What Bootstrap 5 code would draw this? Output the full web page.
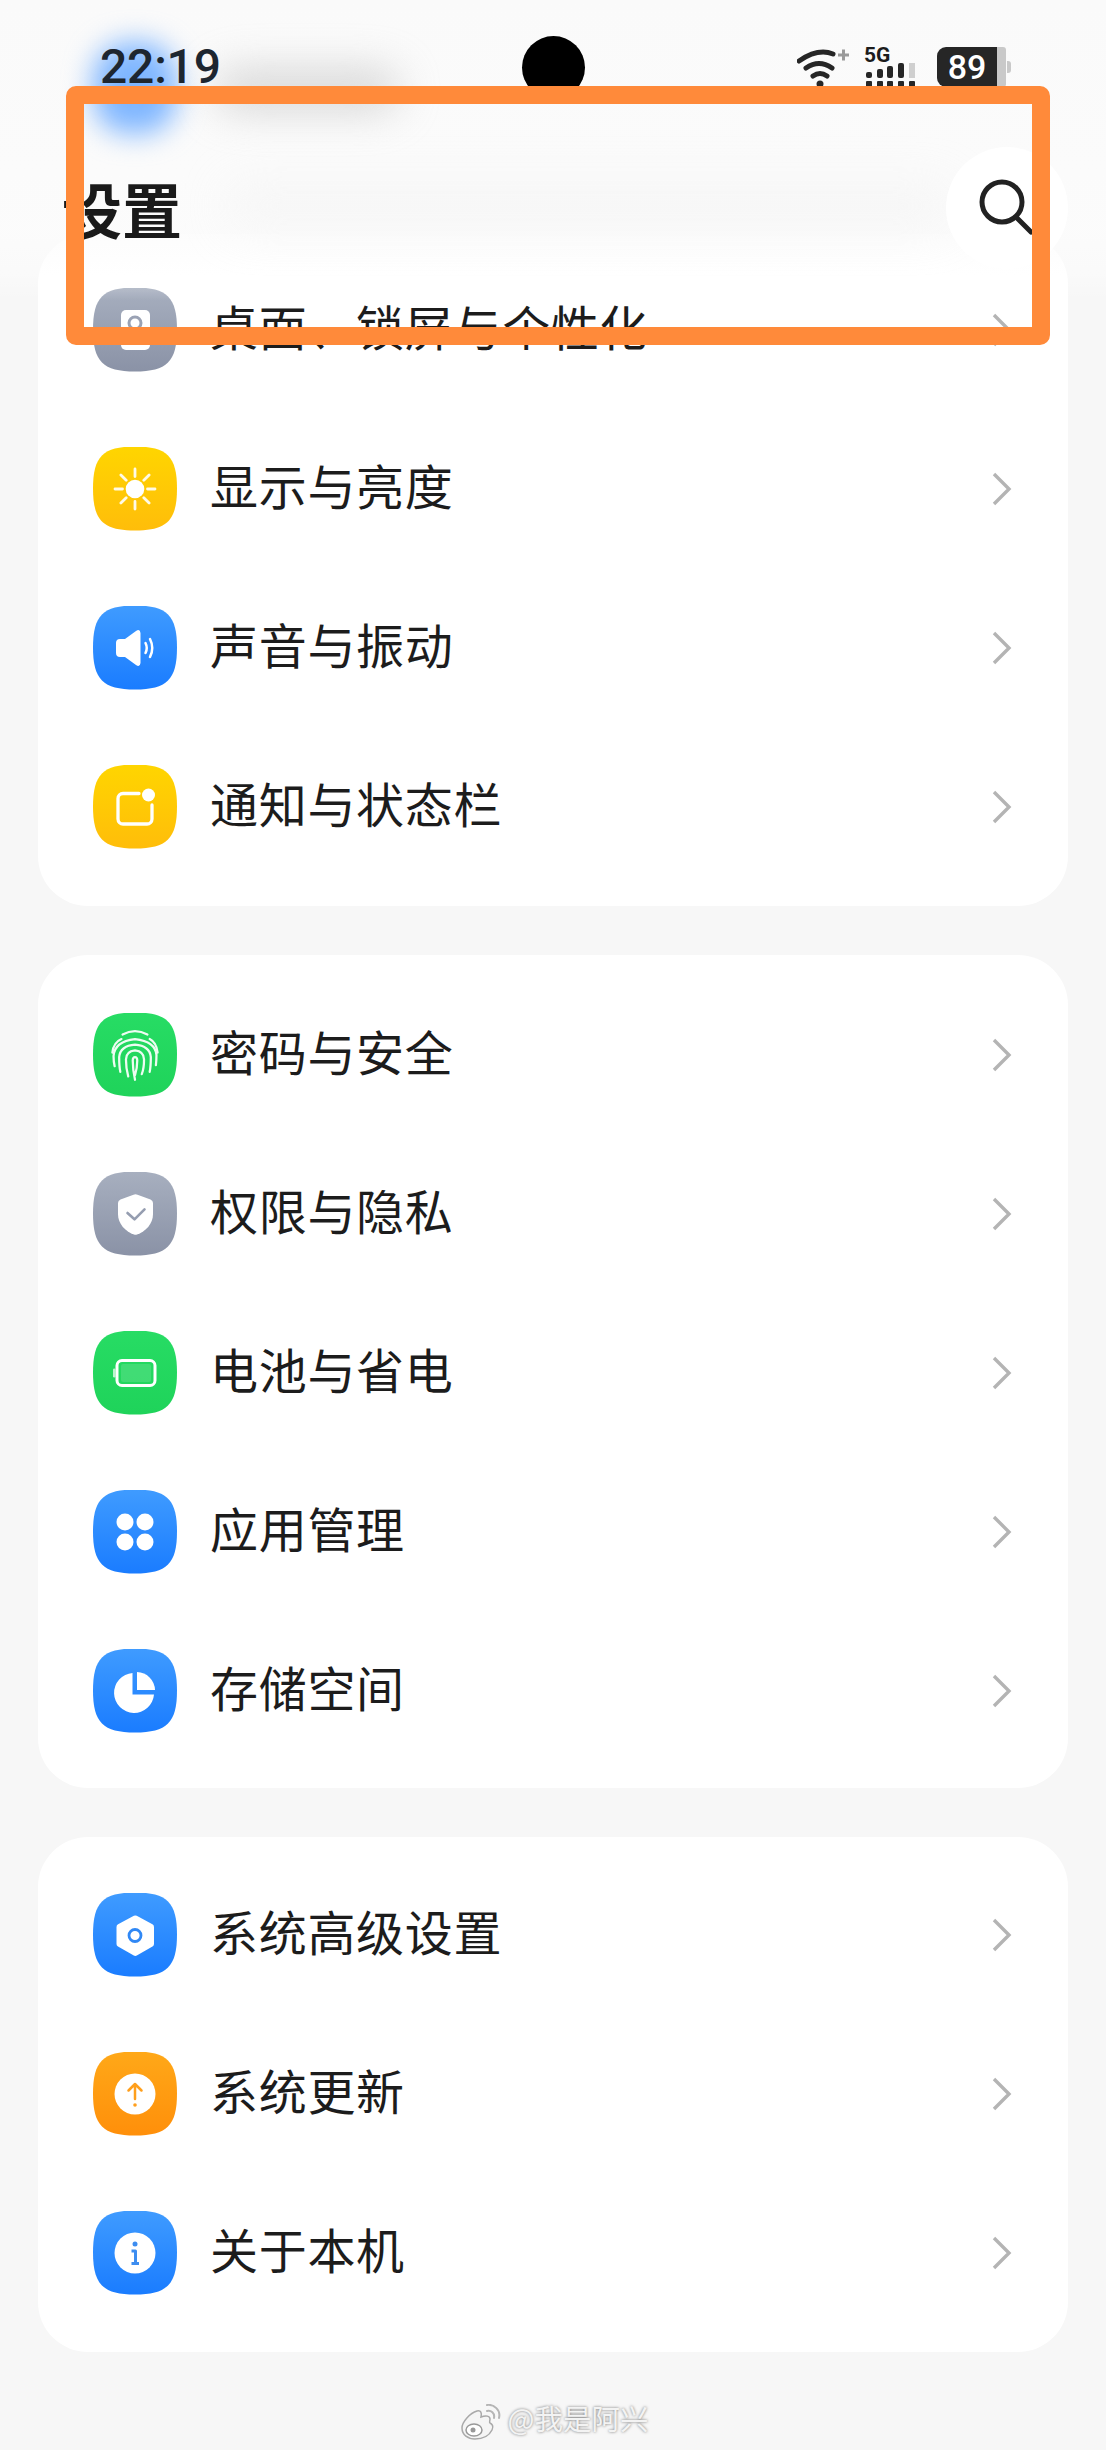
<!DOCTYPE html>
<html lang="zh-CN">
<head>
<meta charset="utf-8">
<title>设置</title>
<link href="https://cdn.jsdelivr.net/npm/bootstrap@5.3.0/dist/css/bootstrap.min.css" rel="stylesheet">
<style>
html,body{margin:0;background:#f7f7f7}
.phone{position:relative;width:1106px;height:2450px;overflow:hidden;background:#f7f7f7;font-family:"Noto Sans CJK SC","Noto Sans",sans-serif;color:#1c1c1c}
.lists{padding:234px 38px 0;gap:49px}
.group{background:#fff;border-radius:50px;padding:0 55px 0 55px}
.group-a{padding-top:16px;padding-bottom:20px}
.group-b{padding-top:20px;padding-bottom:18px}
.group-c{padding-top:18px;padding-bottom:20px}
.entry{height:159px;gap:33px}
.entry-label{font-size:48px;line-height:1;letter-spacing:.7px;flex:1;padding-bottom:9px}
.tile{width:84px;height:84px;flex:none;clip-path:path("M42 0C74 0 84 10 84 42S74 84 42 84 0 74 0 42 10 0 42 0Z")}
.tile svg{display:block;width:84px;height:84px}
.t-gray{background:linear-gradient(#a7afbf,#8a92a6)}
.t-yellow{background:linear-gradient(#ffd500,#ffbd0a)}
.t-blue{background:linear-gradient(#3f9bff,#1a7cff)}
.t-green{background:linear-gradient(#27dc64,#1fd35a)}
.t-orange{background:linear-gradient(#ffa818,#ff8f0a)}
.chev{width:22px;height:36px;flex:none}
.top-fade{position:absolute;left:0;top:0;width:100%;height:300px;background:linear-gradient(#fafafa 0,#fbfbfb 170px,rgba(252,252,252,.9) 232px,rgba(255,255,255,.35) 275px,rgba(255,255,255,0) 300px)}
.ghost-icon{position:absolute;left:93px;top:42px;width:84px;height:92px;border-radius:36px;background:#7fb6ff;filter:blur(14px)}
.ghost-text{position:absolute;left:214px;top:68px;width:186px;height:44px;border-radius:22px;background:#bdbdbd;filter:blur(20px);opacity:.55}
.ghost-band{position:absolute;left:230px;top:186px;width:720px;height:40px;background:#e9e9e9;filter:blur(24px);opacity:.35}
.header{position:absolute;left:0;top:0;width:100%}
.status{height:134px;padding:0 95px 0 100px}
.clock{font-family:Roboto,"Liberation Sans",sans-serif;font-size:48px;font-weight:500;line-height:1;letter-spacing:-.2px;color:#1d2630;width:422px}
.camera{width:63px;height:63px;border-radius:50%;background:#000;flex:none}
.status-right{margin-left:auto;gap:13px}
.signal-box{width:54px}
.fiveg{font-family:Roboto,"Liberation Sans",sans-serif;font-size:21px;font-weight:700;line-height:1;height:15px;padding-left:0;margin-top:-3px;margin-bottom:3px}
.batt-box{margin-left:6px}
.batt{width:60px;height:40px;background:#262626;color:#fff;border-radius:9px 0 0 9px;font-family:Roboto,"Liberation Sans",sans-serif;font-size:34px;font-weight:500;line-height:40px;text-align:center}
.batt-rest{width:9px;height:40px;background:#c9c9c9;border-radius:0 3px 3px 0}
.batt-nub{width:4px;height:12px;background:#c9c9c9;border-radius:0 3px 3px 0;margin-left:1px}
.title-row{padding:26px 38px 0 62px;height:122px}
.title-text{font-size:60px;font-weight:700;line-height:1;color:#1a1a1a}
.search-btn{width:122px;height:122px;border-radius:50%;background:#fff;border:0;padding:0}
.frame{position:absolute;left:66px;top:86px;width:984px;height:259px;border:18px solid #ff8a3a;border-radius:10px;pointer-events:none}
.wm{height:98px;padding-top:52px;gap:6px;color:#f3f3f3;font-size:28.5px;line-height:1;text-shadow:0 0 3px rgba(0,0,0,.55)}
</style>
</head>
<body>
<div class="phone">
  <div class="lists d-flex flex-column">
    <section class="group group-a">
      <div class="entry d-flex align-items-center"><div class="tile t-gray"><svg viewBox="0 0 84 84"><rect x="28" y="22" width="29" height="40" rx="5" fill="#fff"/><circle cx="42" cy="35" r="6" fill="none" stroke="#9aa2b4" stroke-width="3"/></svg></div><div class="entry-label">桌面、锁屏与个性化</div><svg class="chev" viewBox="0 0 22 36"><path d="M3 3l15 15L3 33" fill="none" stroke="#b4b4b4" stroke-width="3.4"/></svg></div>
      <div class="entry d-flex align-items-center"><div class="tile t-yellow"><svg viewBox="0 0 84 84"><circle cx="42" cy="42" r="9.3" fill="#fff"/><g stroke="#fff" stroke-width="2.8" stroke-linecap="round" opacity=".9"><path d="M42 22v7.500M42 54.500v7.500M22 42h7.500M54.500 42H62M27.900 27.900l5.300 5.300M50.800 50.800l5.300 5.300M27.900 56.100l5.300-5.300M50.800 33.200l5.300-5.300"/></g></svg></div><div class="entry-label">显示与亮度</div><svg class="chev" viewBox="0 0 22 36"><path d="M3 3l15 15L3 33" fill="none" stroke="#b4b4b4" stroke-width="3.4"/></svg></div>
      <div class="entry d-flex align-items-center"><div class="tile t-blue"><svg viewBox="0 0 84 84"><path d="M23 37q0-4 4-4h5l11-8q4-2.500 4.500 2v30q-.5 4.500-4.500 2l-11-8h-5q-4 0-4-4z" fill="#fff"/><path d="M52.500 37q2.500 5 0 10M57 33q4.500 9 0 18" fill="none" stroke="#fff" stroke-width="2.500" stroke-linecap="round"/></svg></div><div class="entry-label">声音与振动</div><svg class="chev" viewBox="0 0 22 36"><path d="M3 3l15 15L3 33" fill="none" stroke="#b4b4b4" stroke-width="3.4"/></svg></div>
      <div class="entry d-flex align-items-center"><div class="tile t-yellow"><svg viewBox="0 0 84 84"><path d="M46 28.500H30a5 5 0 0 0-5 5V54a5 5 0 0 0 5 5h24a5 5 0 0 0 5-5V40" fill="none" stroke="#fff" stroke-width="3.300" stroke-linecap="round"/><circle cx="55.500" cy="30" r="6.500" fill="#fff"/></svg></div><div class="entry-label">通知与状态栏</div><svg class="chev" viewBox="0 0 22 36"><path d="M3 3l15 15L3 33" fill="none" stroke="#b4b4b4" stroke-width="3.4"/></svg></div>
    </section>
    <section class="group group-b">
      <div class="entry d-flex align-items-center"><div class="tile t-green"><svg viewBox="0 0 84 84"><g transform="translate(42 43) scale(1.13) translate(-42 -44)" fill="none" stroke="#fff" stroke-width="2" stroke-linecap="round" opacity=".92"><path d="M31 25q11-6 22 0"/><path d="M22 41q1-9 8-12M62 41q-1-9-7-12"/><path d="M24 53q-1-4-1-9 1-13 19-15 18 2 19 14 0 5-.5 9"/><path d="M29 58q-1-5-1-13 1-10 14-11 13 1 14 11 0 8-1 13"/><path d="M36 62q-2-7-2-15 0-7 8-8 8 1 8 8 0 8-2 13"/><path d="M42 65q-2-9-2-17 0-3 2-3t2 3q0 7-2 13"/></g></svg></div><div class="entry-label">密码与安全</div><svg class="chev" viewBox="0 0 22 36"><path d="M3 3l15 15L3 33" fill="none" stroke="#b4b4b4" stroke-width="3.4"/></svg></div>
      <div class="entry d-flex align-items-center"><div class="tile t-gray"><svg viewBox="0 0 84 84"><path d="M40.500 22.700q2-.7 4 0l13 4.800q2.500 1 2.500 3.500V42c0 10-7.500 17.500-16 20.500q-1.500.5-3 0C32.500 59.500 25 52 25 42V31q0-2.500 2.500-3.500z" fill="#fff"/><path d="M34.500 41l7 6.300 10-10" fill="none" stroke="#959db0" stroke-width="2.600" stroke-linecap="round" stroke-linejoin="round"/></svg></div><div class="entry-label">权限与隐私</div><svg class="chev" viewBox="0 0 22 36"><path d="M3 3l15 15L3 33" fill="none" stroke="#b4b4b4" stroke-width="3.4"/></svg></div>
      <div class="entry d-flex align-items-center"><div class="tile t-green"><svg viewBox="0 0 84 84"><rect x="24" y="29.500" width="38" height="25" rx="5" fill="none" stroke="#fff" stroke-width="3"/><rect x="28" y="33" width="30" height="18" rx="2" fill="#b8f2cb" opacity=".2"/><rect x="20" y="37.500" width="2.500" height="9" rx="1.200" fill="#fff" opacity=".7"/></svg></div><div class="entry-label">电池与省电</div><svg class="chev" viewBox="0 0 22 36"><path d="M3 3l15 15L3 33" fill="none" stroke="#b4b4b4" stroke-width="3.4"/></svg></div>
      <div class="entry d-flex align-items-center"><div class="tile t-blue"><svg viewBox="0 0 84 84"><g fill="#fff"><circle cx="32" cy="32" r="8.500"/><circle cx="52" cy="32" r="8.500"/><circle cx="32" cy="52" r="8.500"/><circle cx="52" cy="52" r="8.500"/></g></svg></div><div class="entry-label">应用管理</div><svg class="chev" viewBox="0 0 22 36"><path d="M3 3l15 15L3 33" fill="none" stroke="#b4b4b4" stroke-width="3.4"/></svg></div>
      <div class="entry d-flex align-items-center"><div class="tile t-blue"><svg viewBox="0 0 84 84"><path d="M39.500 24v21.500H61A20 20 0 1 1 39.500 24z" fill="#fff"/><path d="M44 23a18.500 18.500 0 0 1 18 18H44z" fill="#fff"/></svg></div><div class="entry-label">存储空间</div><svg class="chev" viewBox="0 0 22 36"><path d="M3 3l15 15L3 33" fill="none" stroke="#b4b4b4" stroke-width="3.4"/></svg></div>
    </section>
    <section class="group group-c">
      <div class="entry d-flex align-items-center"><div class="tile t-blue"><svg viewBox="0 0 84 84"><path d="M42.300 25.500L58 34v17l-15.700 9-15.800-9V34z" fill="#fff" stroke="#fff" stroke-width="6" stroke-linejoin="round"/><circle cx="42" cy="42.500" r="6" fill="none" stroke="#3088f5" stroke-width="2.800"/></svg></div><div class="entry-label">系统高级设置</div><svg class="chev" viewBox="0 0 22 36"><path d="M3 3l15 15L3 33" fill="none" stroke="#b4b4b4" stroke-width="3.4"/></svg></div>
      <div class="entry d-flex align-items-center"><div class="tile t-orange"><svg viewBox="0 0 84 84"><circle cx="42" cy="42" r="20.500" fill="#fff"/><path d="M42 47V32M35.500 38.500L42 32l6.500 6.500" fill="none" stroke="#ff9f1c" stroke-width="2.500" stroke-linecap="round" stroke-linejoin="round"/><circle cx="42" cy="53" r="1.800" fill="#ff9f1c"/></svg></div><div class="entry-label">系统更新</div><svg class="chev" viewBox="0 0 22 36"><path d="M3 3l15 15L3 33" fill="none" stroke="#b4b4b4" stroke-width="3.4"/></svg></div>
      <div class="entry d-flex align-items-center"><div class="tile t-blue"><svg viewBox="0 0 84 84"><circle cx="42" cy="42" r="20.500" fill="#fff"/><circle cx="42" cy="33" r="2.500" fill="#3d8df0"/><path d="M38.500 40H42.500V52M38.500 52.500H46" fill="none" stroke="#3d8df0" stroke-width="3" stroke-linejoin="round"/></svg></div><div class="entry-label">关于本机</div><svg class="chev" viewBox="0 0 22 36"><path d="M3 3l15 15L3 33" fill="none" stroke="#b4b4b4" stroke-width="3.4"/></svg></div>
    </section>
  </div>
  <div class="wm d-flex align-items-start justify-content-center">
    <svg width="44" height="36" viewBox="0 0 42 36"><path d="M3 24c0-6 8-15 15-17 4-1 5 2 4 6 5-2 9-1 9 2 0 2-1 3 0 4 2 1 4 3 2 7-3 6-10 9-17 9C9 35 3 31 3 24z" fill="#f5f5f5" stroke="#a9a9a9" stroke-width="1.500"/><ellipse cx="15" cy="26" rx="8" ry="6" fill="#fff" stroke="#999" stroke-width="1.500"/><circle cx="14" cy="26" r="2.500" fill="#999"/><path d="M28 7c4-1 8 2 7 7M28 1c7-1 14 5 12 13" fill="none" stroke="#b5b5b5" stroke-width="2" stroke-linecap="round"/></svg>
    <span>@我是阿兴</span>
  </div>

  <div class="top-fade"></div>
  <div class="ghost-icon"></div>
  <div class="ghost-text"></div>
  <div class="ghost-band"></div>

  <header class="header">
    <div class="status d-flex align-items-center">
      <div class="clock">22:19</div>
      <div class="camera"></div>
      <div class="status-right d-flex align-items-center">
        <svg width="54" height="40" viewBox="0 0 54 40"><g fill="none" stroke="#262626" stroke-width="5" stroke-linecap="round"><path d="M2 14q19-13 34-7"/><path d="M9 21q13-9 26 0"/><path d="M16 29q7-5 14 0"/></g><circle cx="23" cy="37" r="3.500" fill="#262626"/><path d="M41 8h11M46.500 2.500v11" stroke="#9a9a9a" stroke-width="3"/></svg>
        <div class="signal-box d-flex flex-column">
          <div class="fiveg">5G</div>
          <svg width="54" height="24" viewBox="0 0 54 24"><g fill="#262626"><rect x="2" y="9" width="6" height="6" rx="2"/><rect x="13" y="6" width="6" height="9" rx="2"/><rect x="23" y="3" width="6" height="12" rx="2"/><rect x="34" y="0" width="6" height="15" rx="2"/><rect x="2" y="18" width="6" height="6" rx="1"/><rect x="13" y="18" width="6" height="6" rx="1"/><rect x="23" y="18" width="6" height="6" rx="1"/><rect x="34" y="18" width="6" height="6" rx="1"/><rect x="45" y="18" width="6" height="6" rx="1"/></g><rect x="45" y="-5" width="6" height="20" fill="#cfcfcf"/></svg>
        </div>
        <div class="batt-box d-flex align-items-center"><div class="batt">89</div><div class="batt-rest"></div><div class="batt-nub"></div></div>
      </div>
    </div>
    <div class="title-row d-flex align-items-center justify-content-between">
      <div class="title-text">设置</div>
      <button class="search-btn d-flex align-items-center justify-content-center" aria-label="搜索"><svg width="70" height="70" viewBox="0 0 70 70"><circle cx="30" cy="29" r="20" fill="none" stroke="#222" stroke-width="5"/><path d="M44 44l15 15" stroke="#222" stroke-width="5" stroke-linecap="round"/></svg></button>
    </div>
  </header>

  <div class="frame"></div>
</div>
<script src="https://cdn.jsdelivr.net/npm/bootstrap@5.3.0/dist/js/bootstrap.bundle.min.js"></script>
</body>
</html>
